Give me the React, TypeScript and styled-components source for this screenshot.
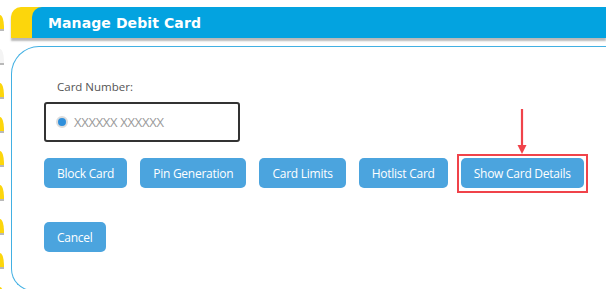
import React from 'react'
import styled, { createGlobalStyle } from 'styled-components'

const BLUE = '#03a3e0'
const YELLOW = '#fcd60c'
const BUTTON = '#4ba4de'
const PANEL_LINE = '#42b0e3'

const railTabs = ['yellow', 'white', 'yellow', 'yellow', 'yellow', 'yellow', 'yellow', 'yellow', 'yellow']
const actions = ['Block Card', 'Pin Generation', 'Card Limits', 'Hotlist Card']

const App = (): JSX.Element => {
  return (
    <>
      <GlobalStyle />
      <Page>
        <Rail>
          {railTabs.map((tone, i) =>
            <RailTab key={i} tone={tone} />
          )}
        </Rail>
        <Main>
          <Header>
            <Title>Manage Debit Card</Title>
          </Header>
          <Panel>
            <Label>Card Number:</Label>
            <CardSelect>
              <Radio />
              <CardText>XXXXXX XXXXXX</CardText>
            </CardSelect>
            <ButtonRow>
              {actions.map(action =>
                <Button key={action}>{action}</Button>
              )}
              <Highlighted>
                <Arrow viewBox="0 0 10 46" aria-hidden>
                  <line x1="5" y1="0" x2="5" y2="38" stroke="#f0434a" strokeWidth="2.2" />
                  <polygon points="0.5,36 9.5,36 5,45" fill="#f0434a" />
                </Arrow>
                <Button>Show Card Details</Button>
              </Highlighted>
            </ButtonRow>
            <CancelRow>
              <Button>Cancel</Button>
            </CancelRow>
          </Panel>
        </Main>
      </Page>
    </>
  )
}

export default App

const GlobalStyle = createGlobalStyle`
  html, body {
    margin: 0;
    padding: 0;
    background: #fff;
    overflow: hidden;
  }
  body {
    font-family: "Open Sans", "Liberation Sans", sans-serif;
  }
  * {
    box-sizing: border-box;
  }
`

const Page = styled.div`
  display: flex;
  width: 606px;
  height: 289px;
  overflow: hidden;
`

const Rail = styled.div`
  width: 5px;
  flex: none;
  display: flex;
  flex-direction: column;
  gap: 18px;
  padding-top: 15px;
`

const RailTab = styled.div<RailTabProps>`
  width: 4px;
  height: 16px;
  flex: none;
  background: ${({ tone }) => tone === 'yellow' ? YELLOW : '#f4f4f4'};
  border-bottom: 2px solid #b9b9b9;
  border-top-right-radius: 4px 12px;
`

const Main = styled.div`
  flex: 1;
  min-width: 0;
  padding: 7px 0 0 6px;
`

const Header = styled.div`
  background: ${YELLOW};
  border-top-left-radius: 10px;
  padding-left: 21px;
  box-shadow: 0 3px 2px rgba(0, 0, 0, 0.28);
`

const Title = styled.h1`
  margin: 0;
  height: 31px;
  background: ${BLUE};
  border-top-left-radius: 10px;
  padding-left: 16px;
  display: flex;
  align-items: center;
  color: #fff;
  font-family: "DejaVu Sans", "Liberation Sans", sans-serif;
  font-weight: bold;
  font-size: 14px;
  letter-spacing: 0.1px;
`

const Panel = styled.section`
  margin-top: 8px;
  border: 1px solid ${PANEL_LINE};
  border-right: none;
  border-top-left-radius: 28px;
  border-bottom-left-radius: 22px;
  padding: 32px 0 38px 32px;
`

const Label = styled.div`
  padding-left: 13px;
  font-size: 11.5px;
  line-height: 16px;
  color: #555;
`

const CardSelect = styled.div`
  margin-top: 7px;
  width: 196px;
  height: 40px;
  border: 2px solid #333;
  border-radius: 3px;
  display: flex;
  align-items: center;
  padding-left: 10px;
  gap: 6px;
`

const Radio = styled.span`
  width: 12px;
  height: 12px;
  border-radius: 50%;
  background: #2f8fdb;
  border: 2px solid #dcdcdc;
`

const CardText = styled.span`
  font-size: 13px;
  color: #9a9a9a;
  letter-spacing: -0.3px;
`

const ButtonRow = styled.div`
  margin-top: 16px;
  display: flex;
  gap: 13px;
`

const CancelRow = styled.div`
  margin-top: 34px;
  display: flex;
`

const Button = styled.button`
  height: 30px;
  padding: 0 13px;
  border: none;
  border-radius: 5px;
  background: ${BUTTON};
  color: #fff;
  font-family: "Open Sans", "Liberation Sans", sans-serif;
  font-size: 12px;
  letter-spacing: -0.25px;
  cursor: pointer;
`

const Highlighted = styled.div`
  position: relative;
  display: flex;

  &::after {
    content: '';
    position: absolute;
    inset: -4px -4px -5px -4px;
    border: 2px solid #f0434a;
    pointer-events: none;
  }
`

const Arrow = styled.svg`
  position: absolute;
  left: 50%;
  bottom: 100%;
  width: 10px;
  height: 46px;
  margin-left: -5px;
  margin-bottom: 3px;
`

interface RailTabProps {
  tone: string
}
